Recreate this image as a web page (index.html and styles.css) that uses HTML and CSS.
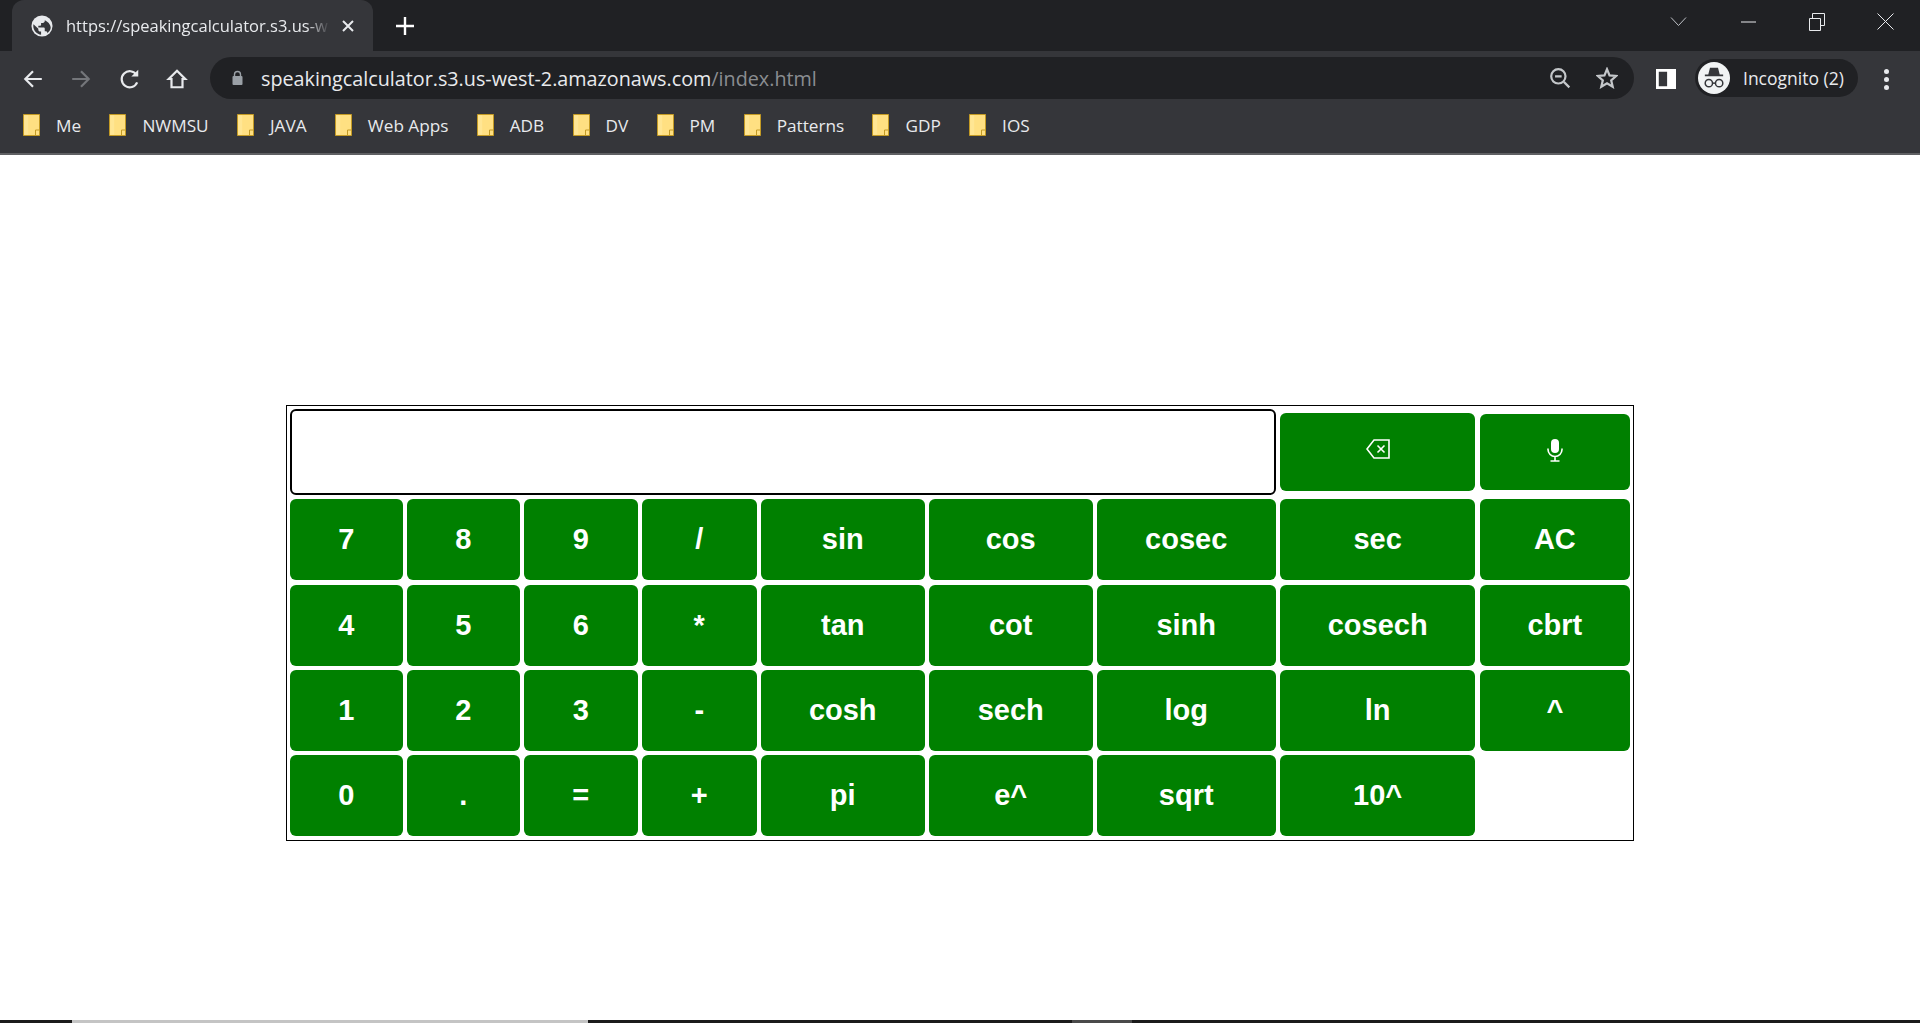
FILE: index.html
```html
<!DOCTYPE html>
<html lang="en">
<head>
<meta charset="utf-8">
<title>Speaking Calculator</title>
<link rel="stylesheet" href="styles.css">
</head>
<body>
<svg class="defs" aria-hidden="true"><symbol id="folder" viewBox="0 0 17 22"><path fill="#ffe082" stroke="#c39a24" stroke-width="1" d="M.5.500h16v21H.5z"/><path fill="#fff0b8" d="M1.200 1.200h4v19.600h-4z" opacity=".35"/><path fill="none" stroke="#c39a24" stroke-width="1" d="M12.500 21.500v-5.500h4"/></symbol></svg>
<header class="chrome">
  <div class="tabstrip">
    <div class="tab">
      <svg class="favicon" viewBox="0 0 24 24"><circle cx="12" cy="12" r="11.500" fill="#e8eaed"/><path fill="#35363a" d="M11 21.500c-4.500-.5-8.500-4.500-8.500-9.500 0-.7.100-1.300.2-1.900L8 15v1c0 1.100.9 2 2 2h1v3.500zM17.800 19c-.3-.8-1-1.400-1.900-1.400H15v-3c0-.6-.4-1-1-1H8v-2h2c.6 0 1-.4 1-1v-2h2c1.100 0 2-.9 2-2v-.9c3 1.200 6.500 4.300 6.500 8.300 0 2.100-1.900 4.600-3.700 6z"/></svg>
      <span class="tab-title">https://speakingcalculator.s3.us-w</span>
      <svg class="tab-close" viewBox="0 0 12 12"><path d="M1 1l10 10M11 1L1 11"/></svg>
    </div>
    <svg class="newtab" viewBox="0 0 18 18"><path d="M9 0v18M0 9h18"/></svg>
    <div class="window-controls">
      <svg class="wc wc-chev" viewBox="0 0 17 9"><path d="M1 .5l7.500 8 7.500-8"/></svg>
      <svg class="wc wc-min" viewBox="0 0 17 2"><path d="M1 1h15"/></svg>
      <svg class="wc wc-max" viewBox="0 0 17 18"><path d="M1.500 5.500h11v12h-11zM4.500 5.500V.5h12v12h-4"/></svg>
      <svg class="wc wc-close" viewBox="0 0 17 17"><path d="M.5.500l16 16M16.500.500l-16 16"/></svg>
    </div>
  </div>
  <div class="toolbar">
    <svg class="nav nav-back" viewBox="0 0 20 20"><path d="M18 10H3M10 3l-7 7 7 7"/></svg>
    <svg class="nav nav-fwd" viewBox="0 0 20 20"><path d="M2 10h15M10 3l7 7-7 7"/></svg>
    <svg class="nav nav-reload" viewBox="0 0 20 20"><path d="M16.500 13a7.300 7.300 0 1 1-.6-6.700"/><path class="solid" d="M17.500 1.500v6.300h-6.300z"/></svg>
    <svg class="nav nav-home" viewBox="0 0 20 20"><path d="M10 2.500L2.500 10h2.500v7.500h10V10h2.500z"/></svg>
    <div class="omnibox">
      <svg class="lock" viewBox="0 0 12 16"><path d="M3 6.500V4.500a3 3 0 0 1 6 0v2" fill="none" stroke="#9aa0a6" stroke-width="1.400"/><rect x="1" y="6" width="10" height="9" rx="1" fill="#9aa0a6"/></svg>
      <span class="url">speakingcalculator.s3.us-west-2.amazonaws.com<span class="url-path">/index.html</span></span>
      <svg class="omni-icon zoom-icon" viewBox="0 0 20 20"><circle cx="8.500" cy="8.500" r="6.500"/><path d="M5.500 8.500h6M13.500 13.500l5 5"/></svg>
      <svg class="omni-icon star-icon" viewBox="0 0 20 20"><path d="M10 2l2.300 5.600 6.100.5-4.600 4 1.400 5.900L10 14.900 4.800 18l1.400-5.900-4.600-4 6.100-.5z"/></svg>
    </div>
    <svg class="sidepanel" viewBox="0 0 18 18"><path fill="#fff" fill-rule="evenodd" d="M0 0h18v18H0zM2.500 2.500v13H10v-13z"/></svg>
    <div class="profile">
      <span class="avatar">
        <svg viewBox="0 0 28 28"><path fill="#35363a" d="M10.500 5h7l1.500 6h3v1.500H6V11h3z"/><circle cx="9.500" cy="18.500" r="3.200" fill="none" stroke="#35363a" stroke-width="1.300"/><circle cx="18.500" cy="18.500" r="3.200" fill="none" stroke="#35363a" stroke-width="1.300"/><path d="M12.700 18.500h2.600" stroke="#35363a" stroke-width="1.300"/></svg>
      </span>
      <span class="profile-name">Incognito (2)</span>
    </div>
    <div class="kebab"><i></i><i></i><i></i></div>
  </div>
  <nav class="bookmarks">
    <a class="bm"><svg class="folder"><use href="#folder"/></svg>Me</a>
    <a class="bm"><svg class="folder"><use href="#folder"/></svg>NWMSU</a>
    <a class="bm"><svg class="folder"><use href="#folder"/></svg>JAVA</a>
    <a class="bm"><svg class="folder"><use href="#folder"/></svg>Web Apps</a>
    <a class="bm"><svg class="folder"><use href="#folder"/></svg>ADB</a>
    <a class="bm"><svg class="folder"><use href="#folder"/></svg>DV</a>
    <a class="bm"><svg class="folder"><use href="#folder"/></svg>PM</a>
    <a class="bm"><svg class="folder"><use href="#folder"/></svg>Patterns</a>
    <a class="bm"><svg class="folder"><use href="#folder"/></svg>GDP</a>
    <a class="bm"><svg class="folder"><use href="#folder"/></svg>IOS</a>
  </nav>
</header>
<main class="page">
  <div class="calc">
    <input class="display" type="text" aria-label="Expression">
    <button class="key key-back"><svg viewBox="0 0 24 20"><path d="M8 1h15v18H8L1 10z"/><path d="M11.500 6.500l7 7M18.500 6.500l-7 7"/></svg></button>
    <button class="key key-mic"><svg viewBox="0 0 18 24"><rect x="5" y="1" width="8" height="14" rx="4" fill="#fff" stroke="none"/><path d="M2 10.500v1a7 7 0 0 0 14 0v-1M9 18.500V23M4.500 23h9"/></svg></button>
    <button class="key">7</button><button class="key">8</button><button class="key">9</button><button class="key">/</button><button class="key">sin</button><button class="key">cos</button><button class="key">cosec</button><button class="key">sec</button><button class="key">AC</button>
    <button class="key">4</button><button class="key">5</button><button class="key">6</button><button class="key">*</button><button class="key">tan</button><button class="key">cot</button><button class="key">sinh</button><button class="key">cosech</button><button class="key">cbrt</button>
    <button class="key">1</button><button class="key">2</button><button class="key">3</button><button class="key">-</button><button class="key">cosh</button><button class="key">sech</button><button class="key">log</button><button class="key">ln</button><button class="key">^</button>
    <button class="key">0</button><button class="key">.</button><button class="key">=</button><button class="key">+</button><button class="key">pi</button><button class="key">e^</button><button class="key">sqrt</button><button class="key">10^</button>
  </div>
</main>
<footer class="taskbar-edge"><span class="edge-dark"></span><span class="edge-light"></span><span class="edge-mid"></span><span class="edge-end"></span></footer>
</body>
</html>
```
FILE: styles.css
```css
* { box-sizing: border-box; }
html, body { margin: 0; height: 100%; }
body {
  width: 1920px; height: 1023px; overflow: hidden; background: #fff;
  display: flex; flex-direction: column;
  font-family: "Open Sans", "Noto Sans", sans-serif;
}
.defs { position: absolute; width: 0; height: 0; }
.chrome { flex: none; height: 155px; background: #35363a; border-bottom: 2px solid #5f6063; display: flex; flex-direction: column; }

.tabstrip { height: 51px; background: #202124; display: flex; align-items: flex-start; padding: 0 0 0 12px; }
.tab {
  width: 361px; height: 51px; background: #35363a; border-radius: 12px 12px 0 0; flex: none;
  display: flex; align-items: center; padding: 0 19px 0 19px; color: #e8eaed;
}
.favicon { width: 22px; height: 22px; flex: none; margin-right: 13px; margin-top: 1px; }
.tab-title {
  flex: 1; min-width: 0; white-space: nowrap; font-size: 16.500px;
  -webkit-mask-image: linear-gradient(to right, #000 91%, transparent 100%);
  mask-image: linear-gradient(to right, #000 91%, transparent 100%);
}
.tab-close { width: 12px; height: 12px; flex: none; margin-left: 12px; fill: none; stroke: #e8eaed; stroke-width: 2; }
.newtab { width: 18px; height: 18px; margin: 17px 0 0 23px; fill: none; stroke: #fff; stroke-width: 2.400; flex: none; }
.window-controls { margin-left: auto; height: 43px; display: flex; align-items: center; padding-right: 26px; }
.wc { fill: none; stroke: #e8eaed; stroke-width: 1; flex: none; }
.wc-chev { width: 17px; height: 9px; margin-right: 52.600px; stroke: #bdc1c6; }
.wc-min { width: 17px; height: 2px; margin-right: 51.600px; }
.wc-max { width: 17px; height: 18px; margin-right: 51.600px; }
.wc-close { width: 17px; height: 17px; }

.toolbar { height: 52px; flex: none; padding: 6px 0 0; display: flex; align-items: flex-start; }
.nav { width: 22px; height: 22px; fill: none; stroke: #e8eaed; stroke-width: 2; flex: none; margin-top: 11px; }
.nav .solid { fill: #e8eaed; stroke: none; }
.nav-back { margin-left: 22px; }
.nav-fwd { margin-left: 26px; stroke: #74767a; }
.nav-reload { margin-left: 27px; }
.nav-home { margin-left: 25px; }
.omnibox {
  width: 1424px; height: 42px; margin-left: 22px; border-radius: 21px; background: #202124;
  display: flex; align-items: center; padding: 0 16px 0 21px; flex: none;
}
.lock { width: 13px; height: 16px; flex: none; }
.url { margin-left: 17px; font-size: 19.750px; color: #e8eaed; white-space: nowrap; flex: 1; }
.url-path { color: #8a8d91; }
.omni-icon { width: 22px; height: 22px; fill: none; stroke: #c4c7ca; stroke-width: 2; flex: none; }
.zoom-icon { margin-right: 25px; }
.sidepanel { width: 20px; height: 20px; flex: none; margin: 12px 0 0 22px; }
.profile {
  width: 163px; height: 38px; margin: 2px 0 0 19px; border-radius: 19px; background: #202124;
  display: flex; align-items: center; padding-left: 3px; flex: none; color: #e8eaed; font-size: 17.500px;
}
.avatar { width: 32px; height: 32px; border-radius: 50%; background: #f1f3f4; flex: none; display: flex; }
.avatar svg { width: 32px; height: 32px; }
.profile-name { margin-left: 13px; white-space: nowrap; }
.kebab { margin: 12px 0 0 26px; display: flex; flex-direction: column; gap: 3px; flex: none; }
.kebab i { width: 5px; height: 5px; border-radius: 50%; background: #e8eaed; display: block; }

.bookmarks { height: 50px; display: flex; align-items: center; padding: 0 0 6px 23px; gap: 28.300px; color: #e8eaed; font-size: 17.200px; }
.bm { display: flex; align-items: center; white-space: nowrap; }
.folder { width: 17px; height: 22px; margin-right: 16px; flex: none; }

.page { flex: 1; min-height: 0; padding: 250px 0 0 286px; }
.calc {
  width: 1348px; height: 436px; border: 1px solid #000; padding: 3px;
  display: grid;
  grid-template-columns: 112.600px 112.600px 113.600px 114.600px 163.600px 163.600px 178.600px 195.600px 150px;
  grid-template-rows: 85.700px 81.300px 81px 81px 81px;
  gap: 4.300px 4.400px;
}
.display { grid-column: 1 / span 7; border: 2px solid #000; border-radius: 6px; background: #fff; height: 86px; outline: none; margin: 0; padding: 0; }
.key {
  background: #008000; color: #fff; border: 0; border-radius: 6px; margin: 0; padding: 0;
  font: bold 29px "Liberation Sans", Arial, sans-serif;
  display: flex; align-items: center; justify-content: center;
}
.key svg { fill: none; stroke: #fff; stroke-width: 1.600; }
.key-back { height: 78px; margin-top: 4px; padding-bottom: 6px; }
.key-back svg { width: 24px; height: 20px; }
.key-mic { height: 76px; margin-top: 5px; padding-bottom: 5px; }
.key-mic svg { width: 18px; height: 24px; }

.taskbar-edge { position: absolute; left: 0; right: 0; bottom: 0; height: 3px; background: #1b1b1b; display: flex; }
.edge-dark { width: 72px; background: #1b1b1b; }
.edge-light { width: 516px; background: #c4c4c4; }
.edge-mid { width: 484px; background: #1b1b1b; }
.edge-end { width: 60px; background: #4a4a4a; }
```
